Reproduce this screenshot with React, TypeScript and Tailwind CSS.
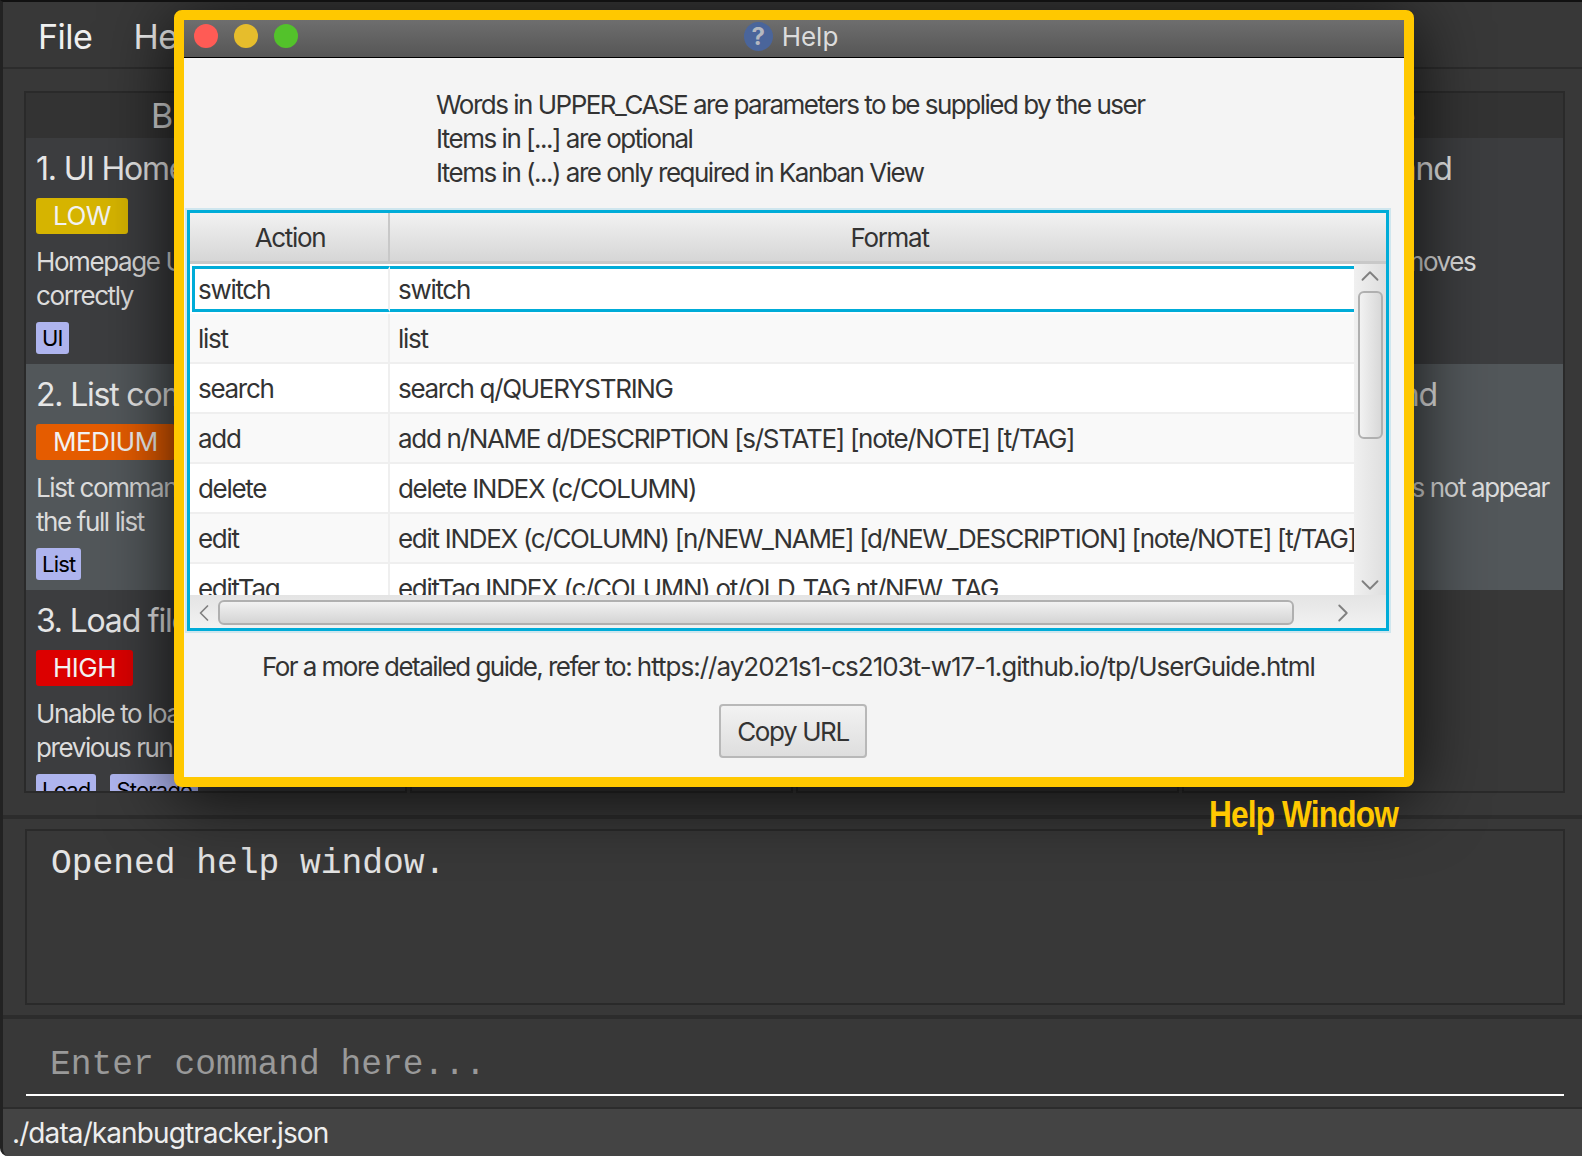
import { ChevronDown, ChevronLeft, ChevronRight, ChevronUp } from "lucide-react";

const columns = [
  {
    title: "Backlog",
    cards: [
      { title: "1. UI Homepage", level: "LOW", desc: "Homepage UI displays\ncorrectly", tags: ["UI"] },
      { title: "2. List command", level: "MEDIUM", desc: "List command displays\nthe full list", tags: ["List"] },
      { title: "3. Load file", level: "HIGH", desc: "Unable to load file from\nprevious run", tags: ["Load", "Storage"] },
    ],
  },
  { title: "Todo", cards: [] },
  { title: "Ongoing", cards: [] },
  {
    title: "Done",
    cards: [
      { title: "4. Clear command", level: "LOW", desc: "Erase command removes", tags: ["UI"] },
      { title: "5. Find command", level: "LOW", desc: "A removed bug does not appear", tags: ["UI"] },
    ],
  },
];

const rows = [
  ["switch", "switch"],
  ["list", "list"],
  ["search", "search q/QUERYSTRING"],
  ["add", "add n/NAME d/DESCRIPTION [s/STATE] [note/NOTE] [t/TAG]"],
  ["delete", "delete INDEX (c/COLUMN)"],
  ["edit", "edit INDEX (c/COLUMN) [n/NEW_NAME] [d/NEW_DESCRIPTION] [note/NOTE] [t/TAG]"],
  ["editTag", "editTag INDEX (c/COLUMN) ot/OLD_TAG nt/NEW_TAG"],
];

const levelColor: Record<string, string> = {
  LOW: "bg-[#d6b400]",
  MEDIUM: "bg-[#e55c00]",
  HIGH: "bg-[#dc0000]",
};

function BugCard({ card, index }: { card: (typeof columns)[0]["cards"][0]; index: number }) {
  return (
    <div className={`h-[226px] shrink-0 overflow-hidden pl-[10px] pt-[11px] ${index === 1 ? "bg-[#52575a]" : "bg-[#3c3d3f]"}`}>
      <div className="h-[40px] whitespace-nowrap text-[32px] leading-[40px] tracking-[-1.2px] text-[#e6e6e6]">{card.title}</div>
      <div className={`mt-[9px] inline-block h-[36px] rounded-[3px] pl-[17px] pr-[17px] text-[26px] leading-[36px] tracking-[-0.5px] text-[#f2f2f2] ${levelColor[card.level]}`}>
        {card.level}
      </div>
      <div className="mt-[11px] whitespace-pre text-[26px] leading-[34px] tracking-[-1.4px] text-[#dcdcdc]">{card.desc}</div>
      <div className="mt-[9px] flex gap-[14px]">
        {card.tags.map((tag) => (
          <span key={tag} className="h-[32px] rounded-[3px] bg-[#aeb4ee] px-[6px] text-[22px] leading-[32px] tracking-[-0.8px] text-black">
            {tag}
          </span>
        ))}
      </div>
    </div>
  );
}

function HelpWindow() {
  return (
    <div className="absolute left-[171px] top-[8px] flex h-[777px] w-[1240px] flex-col rounded-[8px] border-[10px] border-[#ffc800] bg-[#f4f4f4] text-[#333] shadow-[0_10px_70px_rgba(0,0,0,0.8)]">
      {/* Title bar */}
      <div className="relative flex h-[38px] shrink-0 items-center justify-center border-b border-black bg-gradient-to-b from-[#6e6e6e] to-[#565656] pb-[4px]">
        <div className="absolute left-[10px] top-[4px] flex gap-[16px]">
          <span className="h-[24px] w-[24px] rounded-full bg-[#ff5b55]" />
          <span className="h-[24px] w-[24px] rounded-full bg-[#e6bd2c]" />
          <span className="h-[24px] w-[24px] rounded-full bg-[#53c22b]" />
        </div>
        <div className="flex items-center gap-[9px] pr-[6px] text-[26px] leading-none text-[#dcdcdc]">
          <span className="flex h-[29px] w-[29px] items-center justify-center rounded-full bg-[#4a659b] text-[24px] font-bold text-[#b4b8c0]">?</span>
          Help
        </div>
      </div>

      {/* Notes */}
      <div className="h-[152px] shrink-0 pl-[252px] pt-[30px] text-[26px] leading-[34px] tracking-[-1.5px]">
        <div>Words in UPPER_CASE are parameters to be supplied by the user</div>
        <div>Items in [...] are optional</div>
        <div>Items in (...) are only required in Kanban View</div>
      </div>

      {/* Table */}
      <div className="ml-[3px] mr-[15px] flex h-[421px] shrink-0 flex-col border-[3px] border-[#00acd8] bg-[#f4f4f4] text-[26px] tracking-[-1.3px] ring-2 ring-[#cfe6ee]">
        <div className="flex h-[51px] shrink-0 border-b-[3px] border-[#c8c8c8] bg-gradient-to-b from-[#f2f2f2] to-[#d6d6d6]">
          <div className="flex w-[200px] items-center justify-center border-r-2 border-[#c8c8c8] pl-[2px]">Action</div>
          <div className="flex flex-1 items-center justify-center pl-[3px]">Format</div>
        </div>
        <div className="flex min-h-0 flex-1">
          <div className="min-w-0 flex-1 overflow-hidden">
            {rows.map(([action, format], i) =>
              i === 0 ? (
                <div key={action} className="flex h-[50px] bg-white leading-[42px]">
                  <div className="my-[2px] ml-[2px] w-[198px] shrink-0 border-y-[3px] border-l-[3px] border-r-2 border-[#00acd8] border-r-[#efefef] pl-[3px]">{action}</div>
                  <div className="my-[2px] min-w-0 flex-1 border-y-[3px] border-[#00acd8] pl-[8px]">{format}</div>
                </div>
              ) : (
                <div key={action} className={`flex h-[50px] whitespace-nowrap border-b-2 border-[#efefef] leading-[50px] ${i % 2 === 1 ? "bg-[#f9f9f9]" : "bg-white"}`}>
                  <div className="w-[200px] shrink-0 border-r-2 border-[#efefef] pl-[8px]">{action}</div>
                  <div className="min-w-0 flex-1 overflow-hidden pl-[8px]">{format}</div>
                </div>
              ),
            )}
          </div>
          {/* Vertical scrollbar */}
          <div className="flex w-[32px] shrink-0 flex-col items-center bg-gradient-to-r from-[#f0f0f0] to-[#dedede]">
            <ChevronUp size={30} strokeWidth={1.5} className="-my-[3px] shrink-0 text-[#808080]" />
            <div className="mt-[3px] h-[148px] w-[25px] shrink-0 rounded-[6px] border-2 border-[#b0b0b0] bg-gradient-to-r from-[#f2f2f2] to-[#d8d8d8]" />
            <ChevronDown size={30} strokeWidth={1.5} className="-mb-[5px] mt-auto shrink-0 text-[#808080]" />
          </div>
        </div>
        {/* Horizontal scrollbar */}
        <div className="flex h-[33px] shrink-0 items-center bg-gradient-to-b from-[#e4e4e4] to-[#f2f2f2] pt-[2px]">
          <ChevronLeft size={30} strokeWidth={1.5} className="w-[28px] shrink-0 text-[#808080]" />
          <div className="h-[25px] w-[1076px] rounded-[6px] border-2 border-[#b0b0b0] bg-gradient-to-b from-[#f2f2f2] to-[#d4d4d4]" />
          <ChevronRight size={30} strokeWidth={1.5} className="ml-[34px] shrink-0 text-[#808080]" />
        </div>
      </div>

      {/* Footer */}
      <div className="mt-[19px] whitespace-nowrap pl-[78px] text-[26px] leading-[34px] tracking-[-1.55px]">
        For a more detailed guide, refer to: <span className="tracking-[-1px]">https://ay2021s1-cs2103t-w17-1.github.io/tp/UserGuide.html</span>
      </div>
      <button className="ml-[535px] mt-[20px] h-[54px] w-[148px] self-start rounded-[4px] border-2 border-[#b8b8b8] bg-gradient-to-b from-[#f2f2f2] to-[#dedede] text-[26px] tracking-[-1.4px]">
        Copy URL
      </button>
    </div>
  );
}

export default function App() {
  return (
    <div className="relative flex h-[1156px] w-[1582px] flex-col overflow-hidden rounded-bl-[8px] border-l-[3px] border-t-2 border-l-[#222] border-t-[#111] bg-[#383838] font-['Inter',sans-serif]">
      {/* Menu bar */}
      <div className="flex h-[67px] shrink-0 items-center gap-[41px] border-b-2 border-[#2c2c2c] pl-[35px] pt-[4px] text-[34px] tracking-[-0.5px] text-[#f0f0f0]">
        <span>File</span>
        <span>Help</span>
      </div>

      {/* Kanban board */}
      <div className="ml-[21px] mr-[17px] mt-[22px] flex h-[702px] shrink-0 gap-[3px]">
        {columns.map((col) => (
          <div key={col.title} className="flex min-w-0 flex-1 flex-col overflow-hidden border-2 border-[#2a2a2a]">
            <div className="h-[45px] shrink-0 bg-[#333] text-center text-[34px] leading-[46px] text-[#d8d8d8]">{col.title}</div>
            {col.cards.map((card, i) => (
              <BugCard key={card.title} card={card} index={i} />
            ))}
          </div>
        ))}
      </div>

      {/* Result box */}
      <div className="mt-[22px] flex-1 border-t-4 border-[#2c2c2c] pl-[22px] pr-[17px] pt-[10px]">
        <div className="h-[176px] border-2 border-[#2a2a2a] pl-[24px] pt-[13px] font-['Liberation_Mono',monospace] text-[34.6px] leading-[40px] text-[#e4e4e4]">
          Opened help window.
        </div>
      </div>

      {/* Command box */}
      <div className="h-[92px] shrink-0 border-t-4 border-[#2c2c2c] pl-[23px] pr-[18px] pt-[26px]">
        <div className="h-[51px] border-b-2 border-white pl-[24px] font-['Liberation_Mono',monospace] text-[34.6px] leading-[40px] text-[#999]">
          Enter command here...
        </div>
      </div>

      {/* Status bar */}
      <div className="flex h-[49px] shrink-0 items-center border-t-2 border-[#2c2c2c] bg-[#444] pl-[9px] text-[28px] tracking-[-0.9px] text-[#eee]">
        ./data/kanbugtracker.json
      </div>

      <HelpWindow />
      <div className="absolute left-[1206px] top-[793px] origin-left scale-x-[0.88] font-['Liberation_Sans',sans-serif] text-[36px] font-bold leading-[40px] tracking-[-1px] text-[#ffc800]">
        Help Window
      </div>
    </div>
  );
}
